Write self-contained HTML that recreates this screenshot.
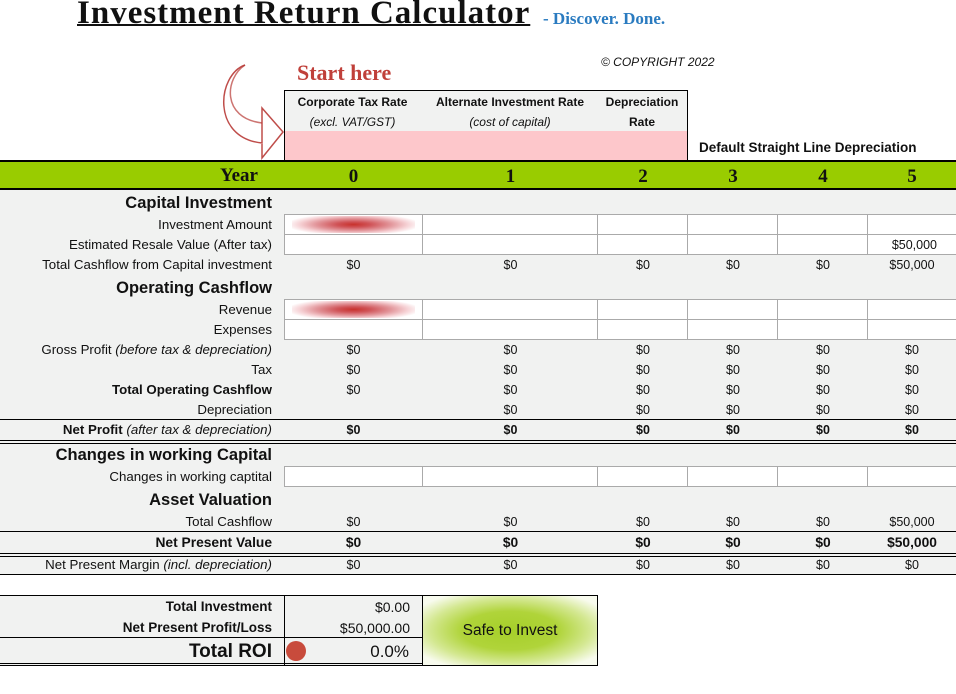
<!DOCTYPE html>
<html><head><meta charset="utf-8"><style>
*{margin:0;padding:0;box-sizing:border-box}
body{width:956px;height:694px;position:relative;background:#fff;font-family:"Liberation Sans",sans-serif;font-size:12.5px;color:#111;overflow:hidden}
.a{position:absolute}
.lab{position:absolute;left:0;width:272px;text-align:right;line-height:16px;white-space:nowrap;font-size:13.3px}
.h{font-weight:bold;font-size:16.5px;line-height:18px}
.row{position:absolute;left:284px;display:flex;line-height:16px;height:16px}
.row span{text-align:center;display:block}
.row span:nth-child(1){width:139px}.row span:nth-child(2){width:175px}.row span:nth-child(3){width:90px}.row span:nth-child(4){width:90px}.row span:nth-child(5){width:90px}.row span:nth-child(6){width:88px}
.b{font-weight:bold}
.inp{position:absolute;left:284px;display:flex;height:20px}
.inp div{background:#fff;border-right:1px solid #aaa;border-bottom:1px solid #aaa;border-top:1px solid #aaa;height:21px}
.inp div:nth-child(1){width:139px;border-left:1px solid #aaa}.inp div:nth-child(2){width:175px}.inp div:nth-child(3){width:90px}.inp div:nth-child(4){width:90px}.inp div:nth-child(5){width:90px}.inp div:nth-child(6){width:88px;border-right:none}
.hl{position:absolute;left:0;width:956px;height:1px;background:#000}
.serif{font-family:"Liberation Serif",serif;font-weight:bold}
.blob{position:absolute;left:292px;width:123px;height:17px;background:radial-gradient(ellipse 55% 65% at 50% 50%,#c8312c 0%,#d05458 25%,#e2959a 55%,#f6d3d6 80%,#fff 100%)}
</style></head><body>
<div class="a serif" style="left:77px;top:-5px;font-size:33px;letter-spacing:1px;text-decoration:underline;text-decoration-thickness:2px;white-space:nowrap">Investment Return Calculator</div>
<div class="a serif" style="left:543px;top:9px;font-size:17px;color:#2a7bc0;white-space:nowrap">- Discover. Done.</div>
<div class="a" style="left:601px;top:55px;font-style:italic;font-size:12px">© COPYRIGHT 2022</div>
<div class="a serif" style="left:297px;top:60px;font-size:22px;color:#c0403a">Start here</div>
<svg class="a" style="left:215px;top:60px" width="75" height="105"><g fill="none" stroke="#b83a36" stroke-width="1.5">
<path d="M30 5 C2 15 -4 78 47 83 L47 48 L68 72 L47 98 L47 84" opacity=".9"/>
<path d="M30 5 C10 18 6 58 47 63" opacity=".7"/></g></svg>
<div class="a" style="left:284px;top:90px;width:404px;height:71px;border:1.5px solid #000;border-bottom:none;background:#f1f2f1"></div>
<div class="a" style="left:285px;top:131px;width:402px;height:30px;background:#fdc7cb"></div>
<div class="a b" style="left:285px;top:95px;width:135px;text-align:center;font-size:12px">Corporate Tax Rate</div>
<div class="a" style="left:285px;top:115px;width:135px;text-align:center;font-size:12px;font-style:italic">(excl. VAT/GST)</div>
<div class="a b" style="left:420px;top:95px;width:180px;text-align:center;font-size:12px">Alternate Investment Rate</div>
<div class="a" style="left:420px;top:115px;width:180px;text-align:center;font-size:12px;font-style:italic">(cost of capital)</div>
<div class="a b" style="left:598px;top:95px;width:88px;text-align:center;font-size:12px">Depreciation</div>
<div class="a b" style="left:598px;top:115px;width:88px;text-align:center;font-size:12px">Rate</div>
<div class="a b" style="left:699px;top:140px;font-size:13.5px">Default Straight Line Depreciation</div>
<div class="a" style="left:0;top:160px;width:956px;height:30px;background:#99cc00;border-top:2px solid #000;border-bottom:2px solid #000"></div>
<div class="a serif" style="left:220px;top:165px;font-size:19px">Year</div>
<div class="row serif" style="top:167px;font-size:19px;height:20px;line-height:20px"><span>0</span><span>1</span><span>2</span><span>3</span><span>4</span><span>5</span></div>
<div class="a" style="left:0;top:190px;width:956px;height:385px;background:#f1f2f1"></div>
<div class="lab h" style="top:194px">Capital Investment</div>
<div class="inp" style="top:214px"><div></div><div></div><div></div><div></div><div></div><div></div></div>
<div class="blob" style="top:216px"></div>
<div class="lab" style="top:217px">Investment Amount</div>
<div class="inp" style="top:234px"><div></div><div></div><div></div><div></div><div></div><div></div></div>
<div class="lab" style="top:237px">Estimated Resale Value (After tax)</div>
<div class="a" style="left:868px;top:237px;width:69px;text-align:right;line-height:16px">$50,000</div>
<div class="lab" style="top:257px">Total Cashflow from Capital investment</div>
<div class="row" style="top:257px"><span>$0</span><span>$0</span><span>$0</span><span>$0</span><span>$0</span><span>$50,000</span></div>
<div class="lab h" style="top:279px">Operating Cashflow</div>
<div class="inp" style="top:299px"><div></div><div></div><div></div><div></div><div></div><div></div></div>
<div class="blob" style="top:301px"></div>
<div class="lab" style="top:302px">Revenue</div>
<div class="inp" style="top:319px"><div></div><div></div><div></div><div></div><div></div><div></div></div>
<div class="lab" style="top:322px">Expenses</div>
<div class="lab" style="top:342px">Gross Profit <i>(before tax &amp; depreciation)</i></div>
<div class="row" style="top:342px"><span>$0</span><span>$0</span><span>$0</span><span>$0</span><span>$0</span><span>$0</span></div>
<div class="lab" style="top:362px">Tax</div>
<div class="row" style="top:362px"><span>$0</span><span>$0</span><span>$0</span><span>$0</span><span>$0</span><span>$0</span></div>
<div class="lab b" style="top:382px">Total Operating Cashflow</div>
<div class="row" style="top:382px"><span>$0</span><span>$0</span><span>$0</span><span>$0</span><span>$0</span><span>$0</span></div>
<div class="lab" style="top:402px">Depreciation</div>
<div class="row" style="top:402px"><span></span><span>$0</span><span>$0</span><span>$0</span><span>$0</span><span>$0</span></div>
<div class="hl" style="top:419px"></div>
<div class="lab" style="top:422px"><b>Net Profit</b> <i>(after tax &amp; depreciation)</i></div>
<div class="row b" style="top:422px"><span>$0</span><span>$0</span><span>$0</span><span>$0</span><span>$0</span><span>$0</span></div>
<div class="hl" style="top:440px"></div><div class="hl" style="top:443px"></div>
<div class="lab h" style="top:446px">Changes in working Capital</div>
<div class="inp" style="top:466px"><div></div><div></div><div></div><div></div><div></div><div></div></div>
<div class="lab" style="top:469px">Changes in working captital</div>
<div class="lab h" style="top:491px">Asset Valuation</div>
<div class="lab" style="top:514px">Total Cashflow</div>
<div class="row" style="top:514px"><span>$0</span><span>$0</span><span>$0</span><span>$0</span><span>$0</span><span>$50,000</span></div>
<div class="hl" style="top:531px"></div>
<div class="lab b" style="top:535px;font-size:13.8px">Net Present Value</div>
<div class="row b" style="top:535px;font-size:13.8px"><span>$0</span><span>$0</span><span>$0</span><span>$0</span><span>$0</span><span>$50,000</span></div>
<div class="hl" style="top:553px"></div><div class="hl" style="top:556px"></div>
<div class="lab" style="top:557px">Net Present Margin <i>(incl. depreciation)</i></div>
<div class="row" style="top:557px"><span>$0</span><span>$0</span><span>$0</span><span>$0</span><span>$0</span><span>$0</span></div>
<div class="hl" style="top:574px"></div>
<div class="a" style="left:0;top:595px;width:423px;height:71px;background:#f1f2f1;border-top:1px solid #000;border-bottom:3px double #000"></div>
<div class="a" style="left:284px;top:595px;width:1px;height:70px;background:#000"></div>
<div class="a" style="left:0;top:637px;width:423px;height:1px;background:#000"></div>
<div class="lab b" style="top:599px;font-size:13.5px">Total Investment</div>
<div class="a" style="left:285px;top:599px;width:125px;text-align:right;font-size:14px">$0.00</div>
<div class="lab b" style="top:620px;font-size:13.5px">Net Present Profit/Loss</div>
<div class="a" style="left:285px;top:620px;width:125px;text-align:right;font-size:14px">$50,000.00</div>
<div class="lab b" style="top:642px;font-size:19px;line-height:20px">Total ROI</div>
<div class="a" style="left:286px;top:641px;width:20px;height:20px;border-radius:50%;background:#c84b3c"></div>
<div class="a" style="left:285px;top:642px;width:124px;text-align:right;font-size:17px">0.0%</div>
<div class="a" style="left:422px;top:595px;width:176px;height:71px;border:1px solid #000;background:radial-gradient(ellipse 62% 62% at 50% 50%,#a6cf2a 0%,#b0d43a 45%,#d4e892 75%,#f8fbee 100%)"></div>
<div class="a" style="left:422px;top:622px;width:176px;text-align:center;font-size:15.5px">Safe to Invest</div>
</body></html>
